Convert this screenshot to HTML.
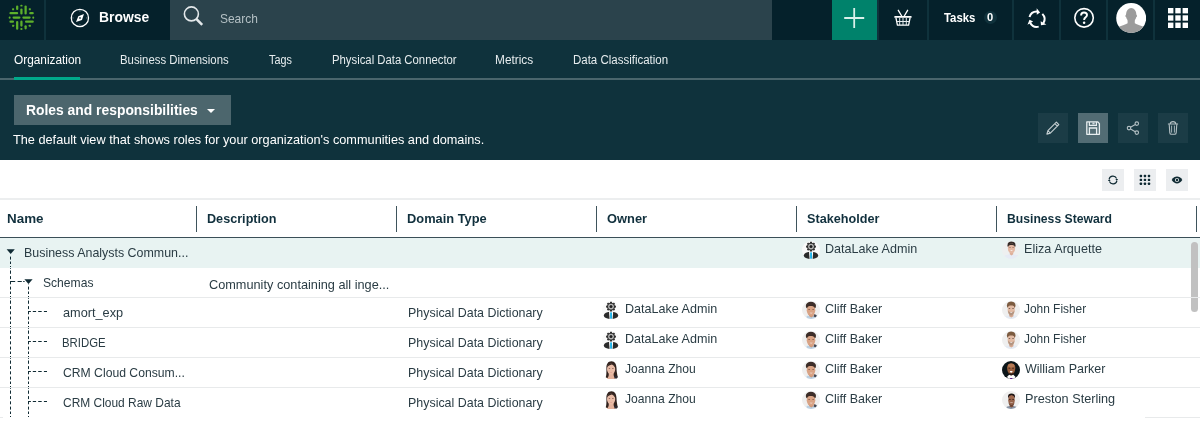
<!DOCTYPE html>
<html>
<head>
<meta charset="utf-8">
<title>Roles and responsibilities</title>
<style>
*{box-sizing:border-box;margin:0;padding:0}
html,body{width:1200px;height:421px;overflow:hidden;background:#fff;font-family:"Liberation Sans",sans-serif;}
.abs{position:absolute}
.t{position:absolute;white-space:nowrap;line-height:1;transform-origin:0 0}
#topbar{position:absolute;left:0;top:0;width:1200px;height:40px;background:#0f323c}
.seg{position:absolute;top:0;height:40px;background:#05212b}
#sub{position:absolute;left:0;top:40px;width:1200px;height:120px;background:#0f323c}
.tab{color:#fff;font-size:12px}
.hbtn{position:absolute;top:113px;width:30px;height:30px;background:#1b3c46}
.sbtn{position:absolute;top:169px;width:22px;height:22px;background:#eceef0}
.hd{font-weight:bold;font-size:13px;color:#11303d}
.colsep{position:absolute;top:206px;width:1px;height:26px;background:#3e545c}
.rowline{position:absolute;z-index:3;left:0;width:1200px;height:1px;background:#e8eaeb}
.c{font-size:13px;color:#2a3c44}
</style>
</head>
<body>
<!-- TOP BAR -->
<div id="topbar">
  <div class="seg" style="left:0;width:44px"></div>
  <div class="seg" style="left:46px;width:124px"></div>
  <div class="seg" style="left:170px;width:602px;background:#2b434c"></div>
  <div class="seg" style="left:772px;width:60px"></div>
  <div class="seg" style="left:832px;width:45px;background:#00826b"></div>
  <div class="seg" style="left:879px;width:48px"></div>
  <div class="seg" style="left:929px;width:83px"></div>
  <div class="seg" style="left:1014px;width:45px"></div>
  <div class="seg" style="left:1061px;width:45px"></div>
  <div class="seg" style="left:1108px;width:45px"></div>
  <div class="seg" style="left:1155px;width:45px"></div>

  <!-- logo -->
  <svg class="abs" style="left:6px;top:2px" width="32" height="32" viewBox="0 0 32 32">
    <g fill="#5db02b">
      <rect x="10.05" y="3.4" width="2.25" height="4.6" rx="1.1"/>
      <rect x="14.3" y="2.7" width="2.25" height="1.9" rx=".9"/>
      <rect x="14.3" y="6.5" width="2.25" height="6.1" rx="1.1"/>
      <rect x="18.5" y="3.4" width="2.25" height="9.1" rx="1.1"/>
      <rect x="3.4" y="10.1" width="8.8" height="2.25" rx="1.1"/>
      <rect x="2.7" y="14.45" width="1.9" height="2.25" rx=".9"/>
      <rect x="6.5" y="14.45" width="8" height="2.25" rx="1.1"/>
      <rect x="3.4" y="18.5" width="4.6" height="2.25" rx="1.1"/>
      <rect x="23.2" y="10.1" width="4.6" height="2.25" rx="1.1"/>
      <rect x="16.3" y="14.45" width="8.4" height="2.25" rx="1.1"/>
      <rect x="26.3" y="14.45" width="1.9" height="2.25" rx=".9"/>
      <rect x="19" y="18.5" width="8.8" height="2.25" rx="1.1"/>
      <rect x="10.05" y="19" width="2.25" height="8.8" rx="1.1"/>
      <rect x="14.3" y="18.6" width="2.25" height="6.1" rx="1.1"/>
      <rect x="14.3" y="26.1" width="2.25" height="1.9" rx=".9"/>
      <rect x="18.5" y="23.2" width="2.25" height="4.2" rx="1.1"/>
      <rect x="6.1" y="6.3" width="2" height="2" rx=".4"/>
      <rect x="22.8" y="6.3" width="2" height="2" rx=".4"/>
      <rect x="6.1" y="22.8" width="2" height="2" rx=".4"/>
      <rect x="22.8" y="22.8" width="2" height="2" rx=".4"/>
    </g>
  </svg>

  <!-- compass -->
  <svg class="abs" style="left:68px;top:6px" width="24" height="24" viewBox="0 0 24 24">
    <circle cx="11.9" cy="11.9" r="8.65" fill="none" stroke="#fff" stroke-width="1.25"/>
    <path d="M15.95 7.95 L13.95 13.95 L8 16.1 L10.3 10.3 Z" fill="#fff"/>
    <circle cx="12" cy="12" r="1.1" fill="#52686f"/>
    <g fill="#6f858b"><circle cx="11.9" cy="4.9" r=".7"/><circle cx="11.9" cy="18.9" r=".7"/><circle cx="4.9" cy="11.9" r=".7"/><circle cx="18.9" cy="11.9" r=".7"/></g>
  </svg>
  <div class="t" id="browse" style="left:99.29px;top:9px;font-size:15px;font-weight:bold;color:#fff;transform:scaleX(0.9254)">Browse</div>

  <!-- search -->
  <svg class="abs" style="left:182px;top:5px" width="24" height="24" viewBox="0 0 24 24">
    <circle cx="9.4" cy="8.9" r="7" fill="none" stroke="#e3e8ea" stroke-width="1.6"/>
    <path d="M14.3 13.9 L20.2 19.8" stroke="#e3e8ea" stroke-width="2.6"/>
  </svg>
  <div class="t" id="search" style="left:220.45px;top:12px;font-size:13px;color:#b4c0c4;transform:scaleX(0.9197)">Search</div>

  <!-- plus -->
  <svg class="abs" style="left:832px;top:0" width="45" height="40" viewBox="0 0 45 40">
    <path d="M22.2 8 V28 M12.2 18 H32.2" stroke="#d9f0ea" stroke-width="1.8" fill="none"/>
  </svg>
  <!-- basket -->
  <svg class="abs" style="left:888px;top:4px" width="30" height="28" viewBox="0 0 30 28">
    <g fill="none" stroke="#fff" stroke-width="1.3">
      <path d="M10.3 6.3 L14 12.5 M19.6 6.3 L16 12.5" stroke-linecap="round"/>
      <path d="M7.9 13.7 L9.4 21.2 H20.6 L22.1 13.7" stroke-linejoin="round"/>
      <path d="M11.7 14 V21 M15 14 V21 M18.3 14 V21 M8.6 17.5 H21.4" stroke-width="1" stroke="#e4eaec"/>
    </g>
    <rect x="6.3" y="12" width="17.3" height="1.8" rx=".5" fill="#fff"/>
  </svg>
  <div class="t" id="tasks" style="left:944.05px;top:11.5px;font-size:12.5px;font-weight:bold;color:#fff;transform:scaleX(0.9101)">Tasks</div>
  <div class="abs" style="left:984px;top:11px;width:12.6px;height:12.6px;border-radius:7px;background:#10323c"></div>
  <div class="t" id="tasks0" style="left:987.40px;top:12px;font-size:11px;font-weight:bold;color:#fff;transform:scaleX(1.0120)">0</div>
  <!-- sync -->
  <svg class="abs" style="left:1022.2px;top:4.7px" width="30" height="28" viewBox="0 0 30 28">
    <path d="M7.50 12.09 A7.65 7.65 0 0 1 15.12 6.55 M20.35 8.89 A7.65 7.65 0 0 1 21.34 18.25 M16.70 21.62 A7.65 7.65 0 0 1 8.10 17.79" fill="none" stroke="#fff" stroke-width="2"/>
    <path d="M18.07 7.59 L14.77 9.85 L14.66 3.25 Z M18.96 20.29 L18.65 16.31 L24.43 19.51 Z M7.52 14.71 L11.12 16.44 L5.46 19.84 Z" fill="#fff"/>
  </svg>
  <!-- help -->
  <svg class="abs" style="left:1073px;top:7px" width="22" height="22" viewBox="0 0 22 22">
    <circle cx="11.05" cy="10.85" r="9.25" fill="none" stroke="#fff" stroke-width="1.6"/>
    <path d="M8.1 8.4 C8.1 6.5 9.4 5.5 11 5.5 C12.8 5.5 14 6.6 14 8.1 C14 10.3 11.1 10.3 11.1 12.9" fill="none" stroke="#fff" stroke-width="1.9"/>
    <circle cx="11.1" cy="15.7" r="1.25" fill="#fff"/>
  </svg>
  <!-- avatar -->
  <svg class="abs" style="left:1116px;top:3px" width="30" height="30" viewBox="0 0 30 30">
    <defs><clipPath id="avc"><circle cx="15.2" cy="15" r="15"/></clipPath></defs>
    <circle cx="15.2" cy="15" r="15" fill="#fff"/>
    <g clip-path="url(#avc)" fill="#9b9b9b">
      <ellipse cx="15.2" cy="12" rx="5.3" ry="6.9"/>
      <ellipse cx="15.2" cy="13" rx="6" ry="1.8"/>
      <path d="M11.6 17 L11.6 20.3 C9.5 22 5 22.4 1.5 24.6 L1.5 31 H29 L29 24.6 C25.5 22.4 21 22 18.8 20.3 L18.8 17 Z"/>
    </g>
  </svg>
  <!-- apps grid -->
  <svg class="abs" style="left:1167px;top:7px" width="22" height="22" viewBox="0 0 22 22">
    <g fill="#fff">
      <rect x="1" y="1" width="5.4" height="5.4"/><rect x="8.3" y="1" width="5.4" height="5.4"/><rect x="15.6" y="1" width="5.4" height="5.4"/>
      <rect x="1" y="8.3" width="5.4" height="5.4"/><rect x="8.3" y="8.3" width="5.4" height="5.4"/><rect x="15.6" y="8.3" width="5.4" height="5.4"/>
      <rect x="1" y="15.6" width="5.4" height="5.4"/><rect x="8.3" y="15.6" width="5.4" height="5.4"/><rect x="15.6" y="15.6" width="5.4" height="5.4"/>
    </g>
  </svg>
</div>

<!-- SUB HEADER -->
<div id="sub"></div>
<div class="abs" style="left:0;top:78px;width:1200px;height:2px;background:#4a656c"></div>
<div class="abs" style="left:14px;top:77px;width:66px;height:3px;background:#00a88a"></div>
<div class="t tab" id="tab1" style="left:13.50px;top:54px;transform:scaleX(0.9872)">Organization</div>
<div class="t tab" id="tab2" style="color:#e6ecee;left:120.38px;top:54px;transform:scaleX(0.9472)">Business Dimensions</div>
<div class="t tab" id="tab3" style="color:#e6ecee;left:269.43px;top:54px;transform:scaleX(0.9014)">Tags</div>
<div class="t tab" id="tab4" style="color:#e6ecee;left:331.59px;top:54px;transform:scaleX(0.9434)">Physical Data Connector</div>
<div class="t tab" id="tab5" style="color:#e6ecee;left:495.37px;top:54px;transform:scaleX(0.9887)">Metrics</div>
<div class="t tab" id="tab6" style="color:#e6ecee;left:572.99px;top:54px;transform:scaleX(0.9571)">Data Classification</div>

<div class="abs" style="left:14px;top:95px;width:217px;height:30px;background:#4c666d"></div>
<div class="t" id="roles" style="left:25.90px;top:102px;font-size:15px;font-weight:bold;color:#fff;transform:scaleX(0.9243)">Roles and responsibilities</div>
<div class="abs" style="left:207.3px;top:109px;width:0;height:0;border-left:4px solid transparent;border-right:4px solid transparent;border-top:4px solid #fff"></div>
<div class="t" id="desc" style="left:13.25px;top:133.4px;font-size:13px;color:#fff;transform:scaleX(0.9786)">The default view that shows roles for your organization's communities and domains.</div>

<div class="hbtn" style="left:1038px"></div>
<div class="hbtn" style="left:1078px;background:#526c74"></div>
<div class="hbtn" style="left:1118px"></div>
<div class="hbtn" style="left:1158px"></div>
<!-- pencil -->
<svg class="abs" style="left:1045px;top:120px" width="16" height="16" viewBox="0 0 16 16">
  <path d="M1.9 14.1 L2.9 10.7 L11.4 2.2 L13.8 4.6 L5.3 13.1 Z M9.9 3.7 L12.3 6.1 M2.9 10.7 L5.3 13.1" fill="none" stroke="#c3cdd0" stroke-width="1.15" stroke-linejoin="round"/>
</svg>
<!-- save -->
<svg class="abs" style="left:1085px;top:120px" width="16" height="16" viewBox="0 0 16 16">
  <path d="M1.8 1.8 H12.6 L14.4 3.6 V14.3 H1.8 Z" fill="none" stroke="#e8eef0" stroke-width="1.3" stroke-linejoin="round"/>
  <path d="M4.4 2 V5.3 H11.4 V2" fill="none" stroke="#e8eef0" stroke-width="1.2"/>
  <rect x="7.4" y="2.4" width="2.2" height="2" fill="#cfd9dc"/>
  <path d="M4.4 14 V8 H11.6 V14" fill="none" stroke="#e8eef0" stroke-width="1.3"/>
</svg>
<!-- share -->
<svg class="abs" style="left:1125px;top:120px" width="16" height="16" viewBox="0 0 16 16">
  <g fill="none" stroke="#b4c0c4" stroke-width="1.1">
    <circle cx="11.8" cy="3.6" r="1.75"/><circle cx="4" cy="8.1" r="1.75"/><circle cx="11.8" cy="12.6" r="1.75"/>
    <path d="M5.5 7.2 L10.3 4.5 M5.5 9 L10.3 11.7"/>
  </g>
</svg>
<!-- trash -->
<svg class="abs" style="left:1165px;top:120px" width="16" height="16" viewBox="0 0 16 16">
  <g fill="none" stroke="#b4c0c4" stroke-width="1.1">
    <path d="M4.2 4.2 L4.8 12.6 Q4.9 14.3 6.4 14.3 H9.6 Q11.1 14.3 11.2 12.6 L11.8 4.2"/>
    <path d="M2.9 4 H13.1 M5.2 3.8 Q5.4 1.6 8 1.6 Q10.6 1.6 10.8 3.8"/>
    <path d="M6.6 5.6 V12.6 M9.4 5.6 V12.6" stroke-width=".9"/>
  </g>
</svg>

<!-- TOOLBAR -->
<div class="sbtn" style="left:1102px"></div>
<div class="sbtn" style="left:1134px"></div>
<div class="sbtn" style="left:1166px"></div>
<svg class="abs" style="left:1107px;top:174px" width="12" height="12" viewBox="0 0 12 12">
  <g fill="none" stroke="#0f2a33" stroke-width="1.15">
    <path d="M2.1 5.2 A4 4 0 0 1 9.6 4.4"/>
    <path d="M9.9 6.8 A4 4 0 0 1 2.4 7.6"/>
  </g>
  <path d="M8.4 5 H11.1 L9.8 7.1 Z" fill="#0f2a33"/>
  <path d="M3.6 7 H0.9 L2.2 4.9 Z" fill="#0f2a33"/>
</svg>
<svg class="abs" style="left:1139px;top:174px" width="12" height="12" viewBox="0 0 12 12">
  <g fill="#0f2a33"><rect x="0.70" y="0.80" width="2.4" height="2.4" rx=".7"/><rect x="4.75" y="0.80" width="2.4" height="2.4" rx=".7"/><rect x="8.80" y="0.80" width="2.4" height="2.4" rx=".7"/><rect x="0.70" y="4.70" width="2.4" height="2.4" rx=".7"/><rect x="4.75" y="4.70" width="2.4" height="2.4" rx=".7"/><rect x="8.80" y="4.70" width="2.4" height="2.4" rx=".7"/><rect x="0.70" y="8.60" width="2.4" height="2.4" rx=".7"/><rect x="4.75" y="8.60" width="2.4" height="2.4" rx=".7"/><rect x="8.80" y="8.60" width="2.4" height="2.4" rx=".7"/></g>
</svg>
<svg class="abs" style="left:1171px;top:174px" width="12" height="12" viewBox="0 0 12 12">
  <path d="M0.7 6 C2.2 3.6 4 2.6 6 2.6 C8 2.6 9.8 3.6 11.3 6 C9.8 8.4 8 9.4 6 9.4 C4 9.4 2.2 8.4 0.7 6 Z" fill="#0f2a33"/>
  <circle cx="6" cy="6" r="2.1" fill="#dfe3e5"/>
  <circle cx="6" cy="6" r="1.2" fill="#0f2a33"/>
</svg>

<!-- TABLE HEADER -->
<div class="abs" style="left:0;top:198px;width:1200px;height:2px;background:#eceeef"></div>
<div class="abs" style="left:0;top:237px;width:1200px;height:1px;background:#3a4f57"></div>
<div class="colsep" style="left:196px"></div>
<div class="colsep" style="left:396px"></div>
<div class="colsep" style="left:596px"></div>
<div class="colsep" style="left:796px"></div>
<div class="colsep" style="left:996px"></div>
<div class="colsep" style="left:1196px"></div>
<div class="t hd" id="h1" style="left:6.75px;top:212px;transform:scaleX(1.0317)">Name</div>
<div class="t hd" id="h2" style="left:206.70px;top:212px;transform:scaleX(0.9718)">Description</div>
<div class="t hd" id="h3" style="left:406.73px;top:212px;transform:scaleX(0.9887)">Domain Type</div>
<div class="t hd" id="h4" style="left:607.49px;top:212px;transform:scaleX(0.9904)">Owner</div>
<div class="t hd" id="h5" style="left:806.69px;top:212px;transform:scaleX(0.9724)">Stakeholder</div>
<div class="t hd" id="h6" style="left:1006.74px;top:212px;transform:scaleX(0.9373)">Business Steward</div>

<!-- ROWS -->
<div class="abs" style="left:0;top:238px;width:1200px;height:30px;background:#e8f3f2"></div>
<div class="rowline" style="top:297px"></div>
<div class="rowline" style="top:327px"></div>
<div class="rowline" style="top:357px"></div>
<div class="rowline" style="top:387px"></div>
<div class="abs" style="left:1145px;top:417px;width:55px;height:1px;background:#e8eaeb"></div>
<div class="abs" style="left:0;top:417px;width:3px;height:1px;background:#e8eaeb"></div>
<!-- scrollbar -->
<div class="abs" style="left:1191px;top:242px;width:7px;height:70px;border-radius:4px;background:#c1c1c1"></div>

<!-- tree lines -->
<svg class="abs" style="left:0;top:238px" width="60" height="183" viewBox="0 0 60 183">
  <g stroke="#0f2a33" stroke-width="1" fill="none">
    <path d="M10.5 18.6 V21.6 M10.5 23.5 V26.0 M10.5 28.0 V29.0 M10.5 30.0 V30.8 M10.5 32.5 V35.8 M10.5 38.1 V41.1 M10.5 43.3 V46.3 M10.5 48.6 V51.6 M10.5 53.5 V56.0 M10.5 58.0 V59.0 M10.5 60.0 V60.8 M10.5 62.5 V65.8 M10.5 68.1 V71.1 M10.5 73.3 V76.3 M10.5 78.6 V81.6 M10.5 83.5 V86.0 M10.5 88.0 V89.0 M10.5 90.0 V90.8 M10.5 92.5 V95.8 M10.5 98.1 V101.1 M10.5 103.3 V106.3 M10.5 108.6 V111.6 M10.5 113.5 V116.0 M10.5 118.0 V119.0 M10.5 120.0 V120.8 M10.5 122.5 V125.8 M10.5 128.1 V131.1 M10.5 133.3 V136.3 M10.5 138.6 V141.6 M10.5 143.5 V146.0 M10.5 148.0 V149.0 M10.5 150.0 V150.8 M10.5 152.5 V155.8 M10.5 158.1 V161.1 M10.5 163.3 V166.3 M10.5 168.6 V171.6 M10.5 173.5 V176.0 M10.5 178.0 V179.0"/>
    <path d="M28.5 46.0 V46.3 M28.5 48.6 V51.6 M28.5 53.5 V56.0 M28.5 58.0 V59.0 M28.5 60.0 V60.8 M28.5 62.5 V65.8 M28.5 68.1 V71.1 M28.5 73.3 V76.3 M28.5 78.6 V81.6 M28.5 83.5 V86.0 M28.5 88.0 V89.0 M28.5 90.0 V90.8 M28.5 92.5 V95.8 M28.5 98.1 V101.1 M28.5 103.3 V106.3 M28.5 108.6 V111.6 M28.5 113.5 V116.0 M28.5 118.0 V119.0 M28.5 120.0 V120.8 M28.5 122.5 V125.8 M28.5 128.1 V131.1 M28.5 133.3 V136.3 M28.5 138.6 V141.6 M28.5 143.5 V146.0 M28.5 148.0 V149.0 M28.5 150.0 V150.8 M28.5 152.5 V155.8 M28.5 158.1 V161.1 M28.5 163.3 V166.3 M28.5 168.6 V171.6 M28.5 173.5 V176.0 M28.5 178.0 V179.0"/>
    <path d="M28.0 73.5 H30.9 M32.8 73.5 H36.1 M38.2 73.5 H41.7 M43.9 73.5 H47.0 M28.0 103.5 H30.9 M32.8 103.5 H36.1 M38.2 103.5 H41.7 M43.9 103.5 H47.0 M28.0 133.5 H30.9 M32.8 133.5 H36.1 M38.2 133.5 H41.7 M43.9 133.5 H47.0 M28.0 163.5 H30.9 M32.8 163.5 H36.1 M38.2 163.5 H41.7 M43.9 163.5 H47.0 M10 43.5 H15.2 M17.6 43.5 H21.8 M23.2 43.5 H24.6"/>
  </g>
  <path d="M6.6 11.3 H14.8 L10.7 16 Z" fill="#0f2a33"/>
  <path d="M24.4 41.2 H32.6 L28.5 45.9 Z" fill="#0f2a33"/>
</svg>

<!-- name col -->
<div class="t c" id="n1" style="left:24.49px;top:246px;transform:scaleX(0.9558)">Business Analysts Commun...</div>
<div class="t c" id="n2" style="left:43.32px;top:276px;transform:scaleX(0.9307)">Schemas</div>
<div class="t c" id="n3" style="left:62.89px;top:306px;transform:scaleX(0.9791)">amort_exp</div>
<div class="t c" id="n4" style="left:62.29px;top:336px;transform:scaleX(0.8750)">BRIDGE</div>
<div class="t c" id="n5" style="left:62.94px;top:366px;transform:scaleX(0.9370)">CRM Cloud Consum...</div>
<div class="t c" id="n6" style="left:62.69px;top:396px;transform:scaleX(0.9194)">CRM Cloud Raw Data</div>
<div class="t c" id="d2" style="left:208.94px;top:278px;transform:scaleX(0.9789)">Community containing all inge...</div>
<div class="t c" id="dt3" style="left:408.10px;top:306px;transform:scaleX(0.9563)">Physical Data Dictionary</div>
<div class="t c" id="dt4" style="left:408.10px;top:336px;transform:scaleX(0.9563)">Physical Data Dictionary</div>
<div class="t c" id="dt5" style="left:408.10px;top:366px;transform:scaleX(0.9563)">Physical Data Dictionary</div>
<div class="t c" id="dt6" style="left:408.10px;top:396px;transform:scaleX(0.9563)">Physical Data Dictionary</div>

<div class="t c" id="o3" style="left:624.79px;top:302px;transform:scaleX(0.9666)">DataLake Admin</div>
<div class="t c" id="o4" style="left:624.79px;top:332px;transform:scaleX(0.9666)">DataLake Admin</div>
<div class="t c" id="o5" style="left:625.45px;top:362px;transform:scaleX(0.9325)">Joanna Zhou</div>
<div class="t c" id="o6" style="left:625.45px;top:392px;transform:scaleX(0.9325)">Joanna Zhou</div>

<div class="t c" id="s1" style="left:824.79px;top:242px;transform:scaleX(0.9666)">DataLake Admin</div>
<div class="t c" id="s3" style="left:824.92px;top:302px;transform:scaleX(0.9584)">Cliff Baker</div>
<div class="t c" id="s4" style="left:824.92px;top:332px;transform:scaleX(0.9584)">Cliff Baker</div>
<div class="t c" id="s5" style="left:824.92px;top:362px;transform:scaleX(0.9584)">Cliff Baker</div>
<div class="t c" id="s6" style="left:824.92px;top:392px;transform:scaleX(0.9584)">Cliff Baker</div>

<div class="t c" id="b1" style="left:1023.99px;top:242px;transform:scaleX(0.9719)">Eliza Arquette</div>
<div class="t c" id="b3" style="left:1024.25px;top:302px;transform:scaleX(0.9158)">John Fisher</div>
<div class="t c" id="b4" style="left:1024.25px;top:332px;transform:scaleX(0.9158)">John Fisher</div>
<div class="t c" id="b5" style="left:1025.45px;top:362px;transform:scaleX(0.9593)">William Parker</div>
<div class="t c" id="b6" style="left:1024.79px;top:392px;transform:scaleX(0.9748)">Preston Sterling</div>


<!-- avatar symbols -->
<svg width="0" height="0" style="position:absolute">
  <defs>
    <clipPath id="cc"><circle cx="9" cy="9" r="9"/></clipPath>
    <filter id="bl" x="-10%" y="-10%" width="120%" height="120%"><feGaussianBlur stdDeviation="0.35"/></filter>
    <symbol id="av-admin" viewBox="0 0 18 18">
      <circle cx="9" cy="9" r="9" fill="#fafafa"/>
      <ellipse cx="9" cy="14.4" rx="7.2" ry="3.6" fill="#2b2b2b"/>
      <path d="M7 10.6 L11.2 10.6 L10.6 18 L7.6 18 Z" fill="#fff"/>
      <rect x="8.1" y="11.4" width="1.9" height="6.3" fill="#1eb4ea"/>
      <path d="M7.97 1.73 L8.14 0.67 L9.86 0.67 L10.03 1.73 L11.01 2.14 L11.88 1.51 L13.09 2.72 L12.46 3.59 L12.87 4.57 L13.93 4.74 L13.93 6.46 L12.87 6.63 L12.46 7.61 L13.09 8.48 L11.88 9.69 L11.01 9.06 L10.03 9.47 L9.86 10.53 L8.14 10.53 L7.97 9.47 L6.99 9.06 L6.12 9.69 L4.91 8.48 L5.54 7.61 L5.13 6.63 L4.07 6.46 L4.07 4.74 L5.13 4.57 L5.54 3.59 L4.91 2.72 L6.12 1.51 L6.99 2.14 Z" fill="#303030"/>
      <circle cx="9" cy="5.6" r="2.9" fill="#b4b4b4"/>
      <circle cx="9" cy="5.6" r="1.5" fill="#1e1e1e"/>
    </symbol>
    <symbol id="av-joanna" viewBox="0 0 18 18">
      <g filter="url(#bl)">
      <path d="M9.4 0.2 C13 0.2 14.4 3.2 14.5 7 C14.6 11 15.2 13.6 15.8 16.2 C14.5 17.4 12.6 17.2 11.8 16.4 L6.4 16.4 C5.6 17.2 4.6 17 3.8 16.2 C4.6 13.5 4.4 10.5 4.4 7 C4.4 3 6 0.2 9.4 0.2 Z" fill="#30221f"/>
      <path d="M7 11 H11.4 L11.8 15 L13.5 18 H5 L6.6 15 Z" fill="#e4b29c"/>
      <ellipse cx="9.1" cy="8.1" rx="4.1" ry="5.6" fill="#e9bca7"/>
      <path d="M5 6.3 C5.8 3.4 7.8 2.2 9.5 2.2 C11.5 2.2 13 3.8 13.3 6.6 C12.2 5 10.8 3.9 9.5 3.6 C8 4 6.2 5 5 6.3 Z" fill="#30221f"/>
      <path d="M12.2 14.2 L15.6 15.5 L15 17.6 L12.6 17.6 Z" fill="#2a2a35"/>
      <rect x="6.6" y="7.2" width="1.7" height=".8" rx=".4" fill="#7a5346"/><rect x="10" y="7.2" width="1.7" height=".8" rx=".4" fill="#7a5346"/>
      <path d="M7.6 10.7 Q9.1 12.1 10.6 10.7 Q9.1 11.2 7.6 10.7 Z" fill="#d4827a"/>
      </g>
    </symbol>
    <symbol id="av-cliff" viewBox="0 0 18 18">
      <circle cx="9" cy="9" r="9" fill="#efefef"/>
      <g clip-path="url(#cc)"><g filter="url(#bl)">
        <path d="M4.6 15.2 C6.5 14 11.5 14 14.6 14.4 L15.4 19 H4 Z" fill="#bcd0e2"/>
        <path d="M12.4 13 L14.8 14.2 L13.6 16.6 L11.6 15.4 Z" fill="#4a4a52"/>
        <path d="M7 12 H11.6 V15 L9.3 16.4 L7 15 Z" fill="#cf9878"/>
        <ellipse cx="8.9" cy="4.9" rx="5.1" ry="4.2" fill="#3e2f2a"/>
        <ellipse cx="9" cy="9.3" rx="4.3" ry="5.5" fill="#d9a385"/>
        <path d="M4.6 6.2 C5.4 3.6 7.4 3 9.4 3.2 C11.6 3.2 13 4.6 13.4 6.8 C12.2 5.6 10.6 5 9 5 C7.4 5 5.6 5.4 4.6 6.2 Z" fill="#3a2b26"/>
        <rect x="6.2" y="7.9" width="1.9" height=".8" rx=".4" fill="#7a4f3e"/><rect x="10.2" y="7.9" width="1.9" height=".8" rx=".4" fill="#7a4f3e"/>
        <path d="M7.6 11.8 Q9.2 13.2 10.8 11.8 Z" fill="#f6ece8"/>
      </g></g>
    </symbol>
    <symbol id="av-john" viewBox="0 0 18 18">
      <circle cx="9" cy="9" r="9" fill="#efefef"/>
      <g clip-path="url(#cc)"><g filter="url(#bl)">
        <path d="M3.6 15.4 C6 14 12 14 15 15 L15.6 19 H3 Z" fill="#e4eaf3"/>
        <path d="M7.2 12 H11.4 V15.2 L9.3 16.6 L7.2 15.2 Z" fill="#d4a78f"/>
        <ellipse cx="9.2" cy="4.4" rx="4.3" ry="4" fill="#7c5b41"/>
        <ellipse cx="9.2" cy="8.7" rx="3.6" ry="5.6" fill="#e2bba4"/>
        <path d="M5.4 9.2 C5.6 13 7.6 14.4 9.2 14.4 C10.8 14.4 12.8 13 13 9.2 C12.4 10.8 11 11 9.2 11 C7.4 11 6 10.8 5.4 9.2 Z" fill="#b39480" transform="translate(1.38 0) scale(.85 1)"/>
        <path d="M5.2 5.8 C5.8 3.4 7.6 2.6 9.4 2.8 C11.4 2.8 12.8 4 13.2 6 C12 5 10.6 4.6 9.2 4.6 C7.8 4.6 6.2 5 5.2 5.8 Z" fill="#7c5b41"/>
        <rect x="6.6" y="7.3" width="1.7" height=".8" rx=".4" fill="#5b4336"/><rect x="10.2" y="7.3" width="1.7" height=".8" rx=".4" fill="#5b4336"/>
        <path d="M7.8 11.3 Q9.2 12.5 10.6 11.3 Z" fill="#fff"/>
      </g></g>
    </symbol>
    <symbol id="av-william" viewBox="0 0 18 18">
      <circle cx="9" cy="9" r="9" fill="#0b1519"/>
      <g clip-path="url(#cc)"><g filter="url(#bl)">
        <path d="M5.6 15.2 L7.6 13.2 H10.8 L12.8 15.2 L13.2 19 H5.2 Z" fill="#fff"/>
        <path d="M5.1 6.4 C5.1 1.2 13.3 1.2 13.3 6.4 C13.3 10 11.6 14.2 9.2 14.2 C6.8 14.2 5.1 10 5.1 6.4 Z" fill="#99613f"/>
        <ellipse cx="9.2" cy="4.6" rx="3.2" ry="2" fill="#b57a55"/>
        <path d="M6 11 C6.6 13.6 8 14.4 9.2 14.4 C10.4 14.4 11.8 13.6 12.4 11 C11.6 12.2 10.4 12.4 9.2 12.4 C8 12.4 6.8 12.2 6 11 Z" fill="#2a1a14"/>
        <rect x="6.5" y="6.7" width="1.8" height=".9" rx=".4" fill="#24140f"/><rect x="10.1" y="6.7" width="1.8" height=".9" rx=".4" fill="#24140f"/>
        <path d="M7.8 10.1 H10.6 Q10.4 11.7 9.2 11.7 Q8 11.7 7.8 10.1 Z" fill="#fff"/>
        <path d="M8.2 16.9 H10.3 L10.6 18.4 H7.9 Z" fill="#5e1a96"/>
      </g></g>
    </symbol>
    <symbol id="av-preston" viewBox="0 0 18 18">
      <circle cx="9" cy="9" r="9" fill="#efefef"/>
      <g clip-path="url(#cc)"><g filter="url(#bl)">
        <path d="M4.4 16 C6.4 14.6 12.4 14.6 14.6 16 L15 19 H4 Z" fill="#8793a4"/>
        <path d="M7.6 12.4 H11.4 V15.4 L9.5 16.6 L7.6 15.4 Z" fill="#7a4c38"/>
        <ellipse cx="9.5" cy="5.2" rx="3.4" ry="2.8" fill="#1d1512"/>
        <ellipse cx="9.5" cy="9.3" rx="3.3" ry="5.4" fill="#96634b"/>
        <ellipse cx="9.5" cy="6.2" rx="2.8" ry="1.3" fill="#a06a50"/>
        <rect x="7" y="7.9" width="1.7" height=".9" rx=".4" fill="#2a1812"/><rect x="10.3" y="7.9" width="1.7" height=".9" rx=".4" fill="#2a1812"/>
        <path d="M7.9 11.4 Q9.5 12.8 11.1 11.4 Z" fill="#f4e6e0"/>
        <path d="M6.4 11.6 C7 14 8.4 14.7 9.5 14.7 C10.6 14.7 12 14 12.6 11.6 C11.8 13.4 10.6 13.9 9.5 13.9 C8.4 13.9 7.2 13.4 6.4 11.6 Z" fill="#553629"/>
      </g></g>
    </symbol>
    <symbol id="av-eliza" viewBox="0 0 18 18">
      <circle cx="9" cy="9" r="9" fill="#eef0f0"/>
      <g clip-path="url(#cc)"><g filter="url(#bl)">
        <path d="M2.4 14.8 C4.6 12.6 14.4 12.6 16.6 14.8 L17 19 H2 Z" fill="#e6ebf5"/>
        <path d="M7.8 10.4 H11.2 V13.2 L9.5 14.4 L7.8 13.2 Z" fill="#dcae98"/>
        <ellipse cx="9.5" cy="4.2" rx="4" ry="3.7" fill="#352b28"/>
        <ellipse cx="9.5" cy="7.5" rx="3.6" ry="4.9" fill="#e4b8a3"/>
        <path d="M6 5.2 C6.6 3 8.2 2.2 9.7 2.4 C11.4 2.4 12.6 3.4 13 5.4 C12 4.4 10.8 4 9.5 4 C8.2 4 6.9 4.4 6 5.2 Z" fill="#352b28"/>
        <rect x="7.2" y="6.2" width="1.6" height=".8" rx=".4" fill="#85604f"/><rect x="10.3" y="6.2" width="1.6" height=".8" rx=".4" fill="#85604f"/>
        <path d="M8.1 9.3 Q9.5 10.7 10.9 9.3 Z" fill="#fff"/>
      </g></g>
    </symbol>
  </defs>
</svg>
<!-- avatars -->
<svg class="abs" style="left:601.8px;top:300.8px" width="18" height="18"><use href="#av-admin"/></svg>
<svg class="abs" style="left:601.8px;top:330.8px" width="18" height="18"><use href="#av-admin"/></svg>
<svg class="abs" style="left:601.8px;top:360.8px" width="18" height="18"><use href="#av-joanna"/></svg>
<svg class="abs" style="left:601.8px;top:390.8px" width="18" height="18"><use href="#av-joanna"/></svg>
<svg class="abs" style="left:801.8px;top:240.8px" width="18" height="18"><use href="#av-admin"/></svg>
<svg class="abs" style="left:801.8px;top:300.8px" width="18" height="18"><use href="#av-cliff"/></svg>
<svg class="abs" style="left:801.8px;top:330.8px" width="18" height="18"><use href="#av-cliff"/></svg>
<svg class="abs" style="left:801.8px;top:360.8px" width="18" height="18"><use href="#av-cliff"/></svg>
<svg class="abs" style="left:801.8px;top:390.8px" width="18" height="18"><use href="#av-cliff"/></svg>
<svg class="abs" style="left:1001.8px;top:240.8px" width="18" height="18"><use href="#av-eliza"/></svg>
<svg class="abs" style="left:1001.8px;top:300.8px" width="18" height="18"><use href="#av-john"/></svg>
<svg class="abs" style="left:1001.8px;top:330.8px" width="18" height="18"><use href="#av-john"/></svg>
<svg class="abs" style="left:1001.8px;top:360.8px" width="18" height="18"><use href="#av-william"/></svg>
<svg class="abs" style="left:1001.8px;top:390.8px" width="18" height="18"><use href="#av-preston"/></svg>

</body>
</html>
